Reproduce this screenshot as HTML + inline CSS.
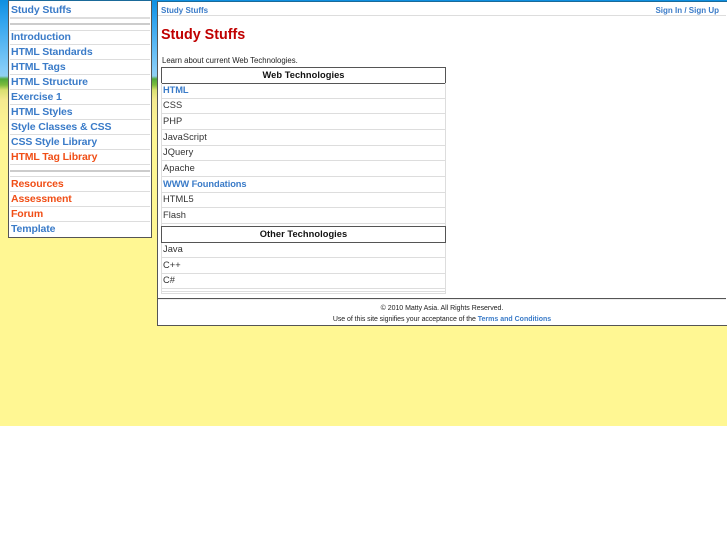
<!DOCTYPE html>
<html>
<head>
<meta charset="utf-8">
<style>
html,body{margin:0;padding:0;width:727px;height:545px;background:#fff;overflow:hidden;font-family:"Liberation Sans",sans-serif}
#w{position:absolute;left:0;top:0;width:727px;height:545px;filter:blur(.3px)}
.a{position:absolute}
#bg{left:0;top:0;width:727px;height:426px;background:linear-gradient(to bottom,#0d8fe0 0,#2fa3ee 20px,#86cdf8 70px,#90d0f0 76px,#4fa83a 79px,#7dbb3c 85px,#d8e070 90px,#f5ea90 100px,#fff793 135px,#fff793 426px)}
#side{left:8px;top:0;width:142px;height:236px;background:#fff;border:1px solid #555;border-top-color:#1a6a9a}
#main{left:157px;top:1px;width:569px;height:323px;background:#fff;border:1px solid #555;border-top-color:#1a6a9a}
.l{position:absolute;background:#ddd;height:1px}
.s{position:absolute;left:11px;font-size:10.5px;font-weight:bold;color:#3a7bc8;line-height:14px;letter-spacing:-.12px;white-space:nowrap}
.o{color:#f04e16}
.r{position:absolute;left:163px;font-size:9.3px;color:#333;line-height:14px;white-space:nowrap;letter-spacing:.05px}
.b{font-weight:bold;color:#3a7bc8;letter-spacing:-.08px}
.h{position:absolute;left:161px;width:283px;height:15px;border:1px solid #555;background:#fff;text-align:center;font-size:9.3px;font-weight:bold;line-height:14px;color:#111;letter-spacing:.05px}
.t{position:absolute;font-size:8px;font-weight:bold;color:#3a7bc8;line-height:12px;white-space:nowrap}
.f{position:absolute;left:158px;width:568px;text-align:center;font-size:7px;color:#222;line-height:10px;white-space:nowrap}
</style>
</head>
<body>
<div id="w">
<div class="a" id="bg"></div>
<div class="a" id="side"></div>
<div class="a" id="main"></div>

<div class="l" style="left:10px;top:17px;width:140px;height:2px"></div>
<div class="l" style="left:10px;top:23px;width:140px;height:2px;background:#ccc"></div>
<div class="l" style="left:10px;top:30px;width:140px"></div>
<div class="l" style="left:10px;top:44px;width:140px"></div>
<div class="l" style="left:10px;top:59px;width:140px"></div>
<div class="l" style="left:10px;top:74px;width:140px"></div>
<div class="l" style="left:10px;top:89px;width:140px"></div>
<div class="l" style="left:10px;top:104px;width:140px"></div>
<div class="l" style="left:10px;top:119px;width:140px"></div>
<div class="l" style="left:10px;top:134px;width:140px"></div>
<div class="l" style="left:10px;top:149px;width:140px"></div>
<div class="l" style="left:10px;top:164px;width:140px"></div>
<div class="l" style="left:10px;top:170px;width:140px;height:2px;background:#ccc"></div>
<div class="l" style="left:10px;top:176px;width:140px"></div>
<div class="l" style="left:10px;top:191px;width:140px"></div>
<div class="l" style="left:10px;top:206px;width:140px"></div>
<div class="l" style="left:10px;top:221px;width:140px"></div>

<div class="s" style="top:3px">Study Stuffs</div>
<div class="s" style="top:30px">Introduction</div>
<div class="s" style="top:45px">HTML Standards</div>
<div class="s" style="top:60px">HTML Tags</div>
<div class="s" style="top:75px">HTML Structure</div>
<div class="s" style="top:90px">Exercise 1</div>
<div class="s" style="top:105px">HTML Styles</div>
<div class="s" style="top:120px">Style Classes &amp; CSS</div>
<div class="s" style="top:135px">CSS Style Library</div>
<div class="s o" style="top:150px">HTML Tag Library</div>
<div class="s o" style="top:177px">Resources</div>
<div class="s o" style="top:192px">Assessment</div>
<div class="s o" style="top:207px">Forum</div>
<div class="s" style="top:222px">Template</div>

<div class="t" style="left:161px;top:5px">Study Stuffs</div>
<div class="t" style="right:8px;top:5px">Sign In / Sign Up</div>
<div class="l" style="left:158px;top:15px;width:568px"></div>
<div class="a" style="left:161px;top:26px;font-size:14.3px;font-weight:bold;color:#c00000;line-height:19px;white-space:nowrap">Study Stuffs</div>
<div class="a" style="left:162px;top:55px;font-size:7.8px;color:#222;line-height:11px;white-space:nowrap">Learn about current Web Technologies.</div>

<div class="h" style="top:67px">Web Technologies</div>
<div class="l" style="left:161px;top:83px;width:1px;height:211px"></div>
<div class="l" style="left:445px;top:83px;width:1px;height:211px"></div>
<div class="l" style="left:161px;top:98px;width:285px"></div>
<div class="l" style="left:161px;top:113px;width:285px"></div>
<div class="l" style="left:161px;top:129px;width:285px"></div>
<div class="l" style="left:161px;top:145px;width:285px"></div>
<div class="l" style="left:161px;top:160px;width:285px"></div>
<div class="l" style="left:161px;top:176px;width:285px"></div>
<div class="l" style="left:161px;top:192px;width:285px"></div>
<div class="l" style="left:161px;top:207px;width:285px"></div>
<div class="l" style="left:161px;top:223px;width:285px"></div>
<div class="r b" style="top:83px">HTML</div>
<div class="r" style="top:98px">CSS</div>
<div class="r" style="top:114px">PHP</div>
<div class="r" style="top:130px">JavaScript</div>
<div class="r" style="top:145px">JQuery</div>
<div class="r" style="top:161px">Apache</div>
<div class="r b" style="top:177px">WWW Foundations</div>
<div class="r" style="top:192px">HTML5</div>
<div class="r" style="top:208px">Flash</div>

<div class="h" style="top:226px">Other Technologies</div>
<div class="r" style="top:242px">Java</div>
<div class="r" style="top:258px">C++</div>
<div class="r" style="top:273px">C#</div>
<div class="l" style="left:161px;top:257px;width:285px"></div>
<div class="l" style="left:161px;top:273px;width:285px"></div>
<div class="l" style="left:161px;top:288px;width:285px"></div>
<div class="l" style="left:161px;top:291px;width:285px"></div>
<div class="l" style="left:161px;top:293px;width:285px"></div>

<div class="l" style="left:158px;top:298px;width:568px;background:#555"></div>
<div class="l" style="left:158px;top:299px;width:568px;background:#eee"></div>
<div class="f" style="top:304px;letter-spacing:-.03px">© 2010 Matty Asia. All Rights Reserved.</div>
<div class="f" style="top:315px"><span style="letter-spacing:-.06px">Use of this site signifies your acceptance of the</span> <span style="color:#3a7bc8;font-weight:bold">Terms and Conditions</span></div>
</div>
</body>
</html>
